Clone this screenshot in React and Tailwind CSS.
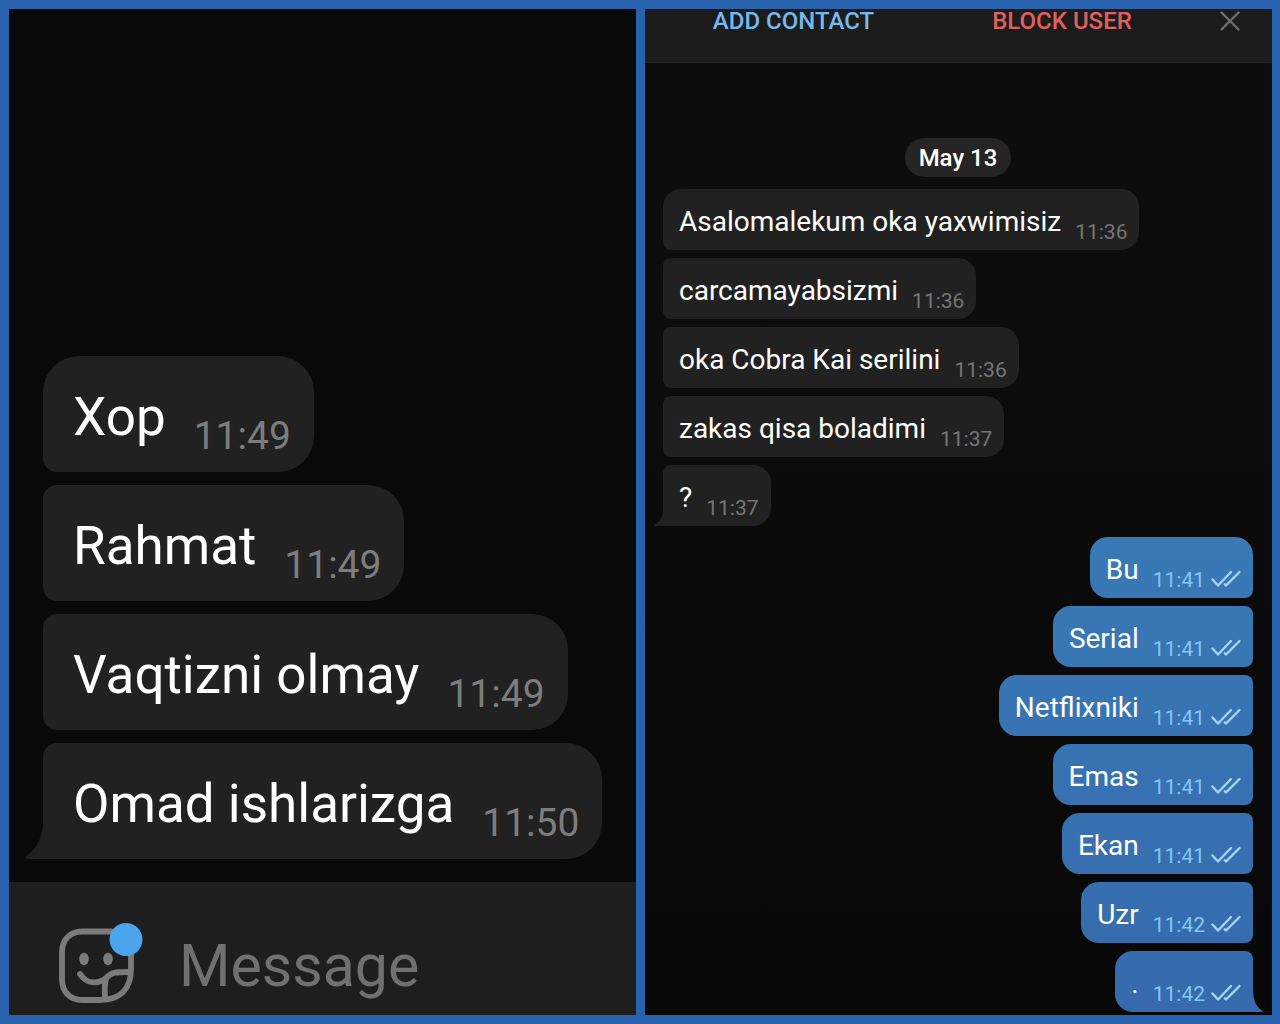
import React, { useState } from "react";

const thanks = [
  { text: "Xop", time: "11:49" },
  { text: "Rahmat", time: "11:49" },
  { text: "Vaqtizni olmay", time: "11:49" },
  { text: "Omad ishlarizga", time: "11:50" },
];

const incoming = [
  { text: "Asalomalekum oka yaxwimisiz", time: "11:36" },
  { text: "carcamayabsizmi", time: "11:36" },
  { text: "oka Cobra Kai serilini", time: "11:36" },
  { text: "zakas qisa boladimi", time: "11:37" },
  { text: "?", time: "11:37" },
];

const outgoing = [
  { text: "Bu", time: "11:41" },
  { text: "Serial", time: "11:41" },
  { text: "Netflixniki", time: "11:41" },
  { text: "Emas", time: "11:41" },
  { text: "Ekan", time: "11:41" },
  { text: "Uzr", time: "11:42" },
  { text: ".", time: "11:42" },
];

const LeftTail = ({ className }) => (
  <svg viewBox="0 0 20 48" className={className} aria-hidden="true">
    <path d="M20 0C20 22 15 37 2 45Q0 47 3 48H20Z" fill="#212121" />
  </svg>
);

const RightTail = () => (
  <svg
    viewBox="0 0 10 25"
    className="absolute bottom-0 left-full w-[10px] h-[25px]"
    aria-hidden="true"
  >
    <path d="M0 0C0 12 2 19 9 23.500Q10 24.500 9 25H0Z" fill="#366cae" />
  </svg>
);

const Ticks = () => (
  <svg
    viewBox="0 0 30 18"
    className="w-[30px] h-[18px] mb-1 ml-[6px]"
    fill="none"
    stroke="#a3d5fb"
    strokeWidth="2.4"
    strokeLinecap="round"
    strokeLinejoin="round"
    aria-label="Read"
  >
    <path d="M1.500 9.500L7 15.500L20 2" />
    <path d="M13.800 14.300L15 15.500L28.500 2" />
  </svg>
);

const StickerIcon = () => (
  <svg viewBox="0 0 84 84" className="w-[84px] h-[84px]" fill="none" aria-hidden="true">
    <g stroke="#7b7b7b" strokeWidth="5.8" strokeLinecap="round" strokeLinejoin="round">
      <path d="M52 8.500H23C11 8.500 3 17 3 29V56C3 69 11 77 23 77H41C61 77 72 66 72 46V29" />
      <path d="M21 51C28 62 40 61 47 55C53 49 56 49 71 49" />
      <path d="M47 56C45 62 46 68 46 76" />
    </g>
    <ellipse cx="25" cy="36" rx="4.800" ry="6.200" fill="#7b7b7b" />
    <ellipse cx="49" cy="36" rx="4.800" ry="6.200" fill="#7b7b7b" />
    <circle cx="67" cy="16.500" r="16.500" fill="#4ba5ec" />
  </svg>
);

const LeftChat = () => {
  const [message, setMessage] = useState("");

  return (
    <section className="flex-1 min-w-0 flex flex-col bg-[#090909]">
      <ul className="flex-1 flex flex-col items-start justify-end gap-[13px] pl-[34px] pb-[23px]">
        {thanks.map((m, i) => (
          <li
            key={m.text}
            className={`relative flex items-end bg-[#212121] pl-[30px] pr-[23px] pt-[30px] pb-[13px] rounded-r-[36px] ${
              i === 0
                ? "rounded-tl-[36px] rounded-bl-[14px]"
                : i === thanks.length - 1
                ? "rounded-tl-[14px]"
                : "rounded-l-[14px]"
            }`}
          >
            <span className="text-[53px] leading-[62px] pb-[11px] text-white whitespace-nowrap">
              {m.text}
            </span>
            <time className="ml-[28px] text-[39px] leading-[46px] text-[#7d7d7d]">
              {m.time}
            </time>
            {i === thanks.length - 1 && (
              <LeftTail className="absolute bottom-0 -left-[19px] w-[20px] h-[48px]" />
            )}
          </li>
        ))}
      </ul>

      {/* Composer */}
      <form
        className="flex items-center bg-[#1e1e1e] pl-[50px] pt-[41px] pb-2"
        onSubmit={(e) => e.preventDefault()}
      >
        <button type="button" aria-label="Stickers">
          <StickerIcon />
        </button>
        <input
          type="text"
          aria-label="Message"
          placeholder="Message"
          value={message}
          onChange={(e) => setMessage(e.target.value)}
          className="flex-1 min-w-0 ml-9 pt-[2px] bg-transparent text-[59px] leading-[68px] text-white placeholder:text-[#707070] outline-none"
        />
      </form>
    </section>
  );
};

const RightChat = () => {
  return (
    <section className="flex-1 min-w-0 flex flex-col bg-linear-to-b from-[#0e0e0e] to-[#080808]">
      {/* Contact bar */}
      <header className="grid grid-cols-[297fr_240fr_90px] items-start bg-[#1c1c1c] border-b border-[#222222] pb-[29px] text-[24px] leading-6 font-medium">
        <button type="button" className="text-[#74b9f0]">
          ADD CONTACT
        </button>
        <button type="button" className="text-[#e0605e]">
          BLOCK USER
        </button>
        <button type="button" aria-label="Close" className="flex justify-center pl-[6px] pt-[2px]">
          <svg viewBox="0 0 20 20" className="w-5 h-5" stroke="#6e6e6e" strokeWidth="2.4" strokeLinecap="round">
            <path d="M1.500 1.500L18.500 18.500M18.500 1.500L1.500 18.500" />
          </svg>
        </button>
      </header>

      <div className="flex-1 flex flex-col justify-end pl-[18px] pr-[19px] pb-[3px]">
        <div className="self-center bg-[#252525] rounded-full px-[14px] pt-[6px] pb-1 mb-3 text-[24px] leading-[29px] font-medium text-white">
          May 13
        </div>

        <ul className="flex flex-col items-start gap-2">
          {incoming.map((m, i) => (
            <li
              key={m.text}
              className={`relative flex items-end bg-[#212121] pl-4 pr-3 pt-[17px] pb-[6px] rounded-r-[18px] ${
                i === 0
                  ? "rounded-tl-[18px] rounded-bl-[8px]"
                  : i === incoming.length - 1
                  ? "rounded-tl-[8px]"
                  : "rounded-l-[8px]"
              }`}
            >
              <span className="text-[28px] leading-8 pb-[6px] text-white whitespace-nowrap">
                {m.text}
              </span>
              <time className="ml-[14px] text-[21px] leading-6 text-[#767676]">{m.time}</time>
              {i === incoming.length - 1 && (
                <LeftTail className="absolute bottom-0 -left-[9px] w-[10px] h-[24px]" />
              )}
            </li>
          ))}
        </ul>

        {/* own messages share one gradient down the window */}
        <ul className="flex flex-col items-end gap-2 mt-[11px]">
          {outgoing.map((m, i) => (
            <li
              key={m.text}
              className={`relative flex items-end bg-linear-to-b from-[#3c8abf] to-[#366aad] bg-fixed pl-4 pr-3 pt-[17px] pb-[6px] rounded-l-[18px] ${
                i === 0
                  ? "rounded-tr-[18px] rounded-br-[8px]"
                  : i === outgoing.length - 1
                  ? "rounded-tr-[8px]"
                  : "rounded-r-[8px]"
              }`}
            >
              <span className="text-[28px] leading-8 pb-[6px] text-white whitespace-nowrap">
                {m.text}
              </span>
              <time className="ml-[14px] text-[21px] leading-6 text-[#83c6f7]">{m.time}</time>
              <Ticks />
              {i === outgoing.length - 1 && <RightTail />}
            </li>
          ))}
        </ul>
      </div>
    </section>
  );
};

const App = () => {
  return (
    <main className="min-h-screen flex gap-[9px] bg-[#2862ac] pl-[9px] pr-2 py-[9px] font-['Roboto',sans-serif]">
      <LeftChat />
      <RightChat />
    </main>
  );
};

export default App;
